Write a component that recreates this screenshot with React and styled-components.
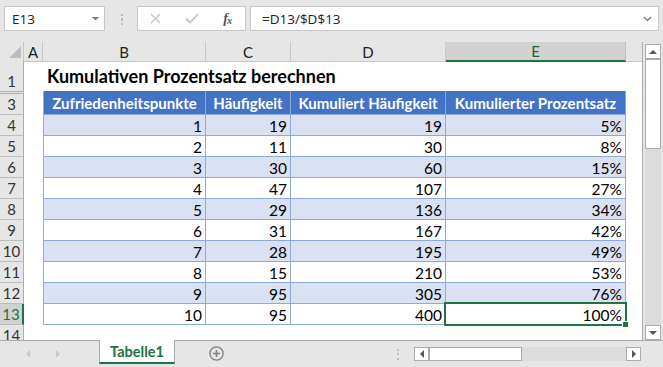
import React from 'react';
import styled, { createGlobalStyle, css } from 'styled-components';

const COLS = '24px 19px 163px 85px 155px 180px 1fr';
const GREEN = '#217346';
const TBORDER = '#8ea9db';

const GlobalStyle = createGlobalStyle`
  html, body { margin: 0; padding: 0; }
  body { background: #e6e6e6; font-family: Lato, "Liberation Sans", sans-serif; }
`;

const Window = styled.div`
  width: 663px;
  height: 367px;
  overflow: hidden;
  display: flex;
  flex-direction: column;
  background: #e6e6e6;
`;

/* ---------- formula bar ---------- */
const FormulaBar = styled.div`
  height: 42px;
  flex: none;
  box-sizing: border-box;
  display: flex;
  align-items: flex-start;
  padding: 6px 0 0 4px;
`;

const Box = styled.div`
  height: 25px;
  box-sizing: border-box;
  background: #fff;
  border: 1px solid #c6c6c6;
  display: flex;
  align-items: center;
  font-family: "Open Sans", "Noto Sans", sans-serif;
  font-size: 13.5px;
  color: #222;
`;

const NameBox = styled(Box)`
  width: 101px;
  justify-content: space-between;
  padding: 0 5px 0 7px;
`;

const FuncBox = styled(Box)`
  width: 109px;
  margin-left: 14px;
`;

const FuncSlot = styled.div`
  width: 36px;
  height: 100%;
  display: flex;
  align-items: center;
  justify-content: center;
`;

const Fx = styled.span`
  font-family: "Liberation Serif", "DejaVu Serif", serif;
  font-style: italic;
  font-weight: bold;
  font-size: 14px;
  color: #555;
  letter-spacing: -1px;
  sub { font-size: 10px; vertical-align: -1px; }
`;

const FormulaInput = styled(Box)`
  width: 409px;
  margin-left: 4px;
  justify-content: space-between;
  padding: 0 6px 0 11px;
`;

const Grip = styled.div`
  width: 2px;
  height: ${p => p.$h || 12}px;
  margin: ${p => p.$m || '0'};
  background: repeating-linear-gradient(to bottom, #bdbdbd 0 2px, transparent 2px 4.5px);
`;

/* ---------- main sheet ---------- */
const Main = styled.div`
  flex: none;
  height: 298px;
  display: flex;
`;

const Sheet = styled.div`
  width: 643px;
  height: 298px;
  box-sizing: border-box;
  border-right: 1px solid #ababab;
  background: #fff;
  display: flex;
  flex-direction: column;
  overflow: hidden;
`;

const Row = styled.div`
  display: grid;
  grid-template-columns: ${COLS};
  height: ${p => p.$h}px;
  flex: none;
`;

const Corner = styled.div`
  background: #e6e6e6;
  border-right: 1px solid #c8c8c8;
  border-bottom: 1px solid #c8c8c8;
  display: flex;
  align-items: flex-end;
  justify-content: flex-end;
  padding: 0 2px 3px 0;
`;

const ColHead = styled.div`
  box-sizing: border-box;
  background: ${p => (p.$sel ? '#d2d2d2' : '#e6e6e6')};
  border-right: 1px solid ${p => (p.$sel ? '#bdbdbd' : '#c8c8c8')};
  border-bottom: ${p => (p.$sel ? `2px solid ${GREEN}` : '1px solid #c8c8c8')};
  display: flex;
  align-items: center;
  justify-content: center;
  font-size: 15px;
  color: ${p => (p.$sel ? '#1f5f3a' : '#222')};
  ${p => p.$blank && css`border-right: none;`}
`;

const RowHead = styled.div`
  box-sizing: border-box;
  background: ${p => (p.$sel ? '#d2d2d2' : '#e6e6e6')};
  border-right: ${p => (p.$sel ? `2px solid ${GREEN}` : '1px solid #ababab')};
  border-bottom: ${p => (p.$noBottom ? 'none' : '1px solid #bdbdbd')};
  ${p => p.$double && css`border-top: 3px double #b0b0b0;`}
  display: flex;
  align-items: flex-end;
  justify-content: center;
  padding-bottom: 1px;
  font-size: 15px;
  color: ${p => (p.$sel ? GREEN : '#333')};
`;

const Cell = styled.div``;

const TitleCell = styled.div`
  grid-column: 3 / 8;
  display: flex;
  align-items: flex-end;
  padding: 0 0 4px 4px;
  font-weight: bold;
  font-size: 18px;
  color: #000;
  white-space: nowrap;
`;

const HeadCell = styled.div`
  box-sizing: border-box;
  background: #4472c4;
  border-right: 1px solid ${TBORDER};
  border-bottom: 1px solid ${TBORDER};
  ${p => p.$first && css`border-left: 1px solid ${TBORDER};`}
  display: flex;
  align-items: flex-end;
  justify-content: center;
  padding-bottom: 2px;
  font-weight: bold;
  font-size: 15px;
  color: #fff;
  white-space: nowrap;
`;

const DataCell = styled.div`
  position: relative;
  box-sizing: border-box;
  background: ${p => (p.$band ? '#d9e1f2' : '#fff')};
  border-right: 1px solid ${TBORDER};
  border-bottom: 1px solid ${TBORDER};
  ${p => p.$first && css`border-left: 1px solid ${TBORDER};`}
  display: flex;
  align-items: flex-end;
  justify-content: flex-end;
  padding: 0 3px 0 0;
  font-size: 15.5px;
  color: #000;
  ${p => p.$active && css`
    &::after {
      content: '';
      position: absolute;
      top: -2px;
      left: -2px;
      right: -2px;
      bottom: -2px;
      border: 2px solid ${GREEN};
    }
  `}
`;

const Handle = styled.span`
  position: absolute;
  right: -4px;
  bottom: -4px;
  width: 5px;
  height: 5px;
  background: ${GREEN};
  border: 1px solid #fff;
  z-index: 2;
`;

/* ---------- scrollbars ---------- */
const VScrollArea = styled.div`
  flex: 1;
  display: flex;
  padding: 2px 0 0 2px;
`;

const VScroll = styled.div`
  width: 16px;
  height: 296px;
  display: flex;
  flex-direction: column;
`;

const ScrollBtn = styled.div`
  flex: none;
  box-sizing: border-box;
  width: ${p => p.$w || 16}px;
  height: ${p => p.$h || 15}px;
  background: #fff;
  border: 1px solid #ababab;
  display: flex;
  align-items: center;
  justify-content: center;
`;

const Thumb = styled.div`
  flex: none;
  box-sizing: border-box;
  background: #fff;
  border: 1px solid #ababab;
  ${p => (p.$vertical
    ? css`height: ${p.$size}px; border-top-width: 2px; margin-top: -1px;`
    : css`width: ${p.$size}px; border-left-width: 2px; margin-left: -1px;`)}
`;

const Track = styled.div`
  flex: 1;
  background: #dcdcdc;
`;

/* ---------- tab bar ---------- */
const TabBar = styled.div`
  flex: 1;
  box-sizing: border-box;
  border-top: 1px solid #ababab;
  display: flex;
  align-items: flex-start;
`;

const Nav = styled.div`
  width: 99px;
  height: 26px;
  display: flex;
  align-items: center;
  padding-left: 20px;
  gap: 15px;
  box-sizing: border-box;
`;

const NavBtn = styled.div`
  width: 15px;
  display: flex;
  justify-content: center;
`;

const Tab = styled.div`
  width: 76px;
  height: 24px;
  margin-top: -1px;
  box-sizing: border-box;
  background: #fff;
  border-left: 1px solid #ababab;
  border-right: 1px solid #ababab;
  border-bottom: 2px solid ${GREEN};
  display: flex;
  align-items: center;
  justify-content: center;
  padding-top: 1px;
  font-weight: bold;
  font-size: 14.5px;
  color: ${GREEN};
`;

const AddSheet = styled.div`
  margin: 5px 0 0 34px;
  width: 15px;
  height: 15px;
  display: flex;
`;

const Spacer = styled.div`
  flex: 1;
`;

const HScroll = styled.div`
  width: 227px;
  height: 14px;
  margin: 6px 22px 0 0;
  display: flex;
`;

const Tri = ({ dir, color = '#555', size = 4 }) => {
  const s = size;
  const pts = {
    up: `0,${s} ${s},0 ${2 * s},${s}`,
    down: `0,0 ${2 * s},0 ${s},${s}`,
    left: `${s},0 ${s},${2 * s} 0,${s}`,
    right: `0,0 ${s},${s} 0,${2 * s}`,
  }[dir];
  const vertical = dir === 'up' || dir === 'down';
  return (
    <svg width={vertical ? 2 * s : s} height={vertical ? s : 2 * s}>
      <polygon points={pts} fill={color} />
    </svg>
  );
};

const headers = ['Zufriedenheitspunkte', 'Häufigkeit', 'Kumuliert Häufigkeit', 'Kumulierter Prozentsatz'];
const data = [
  [1, 19, 19, '5%'],
  [2, 11, 30, '8%'],
  [3, 30, 60, '15%'],
  [4, 47, 107, '27%'],
  [5, 29, 136, '34%'],
  [6, 31, 167, '42%'],
  [7, 28, 195, '49%'],
  [8, 15, 210, '53%'],
  [9, 95, 305, '76%'],
  [10, 95, 400, '100%'],
];

export default function App() {
  return (
    <>
      <GlobalStyle />
      <Window>
        <FormulaBar>
          <NameBox>
            <span>E13</span>
            <Tri dir="down" color="#7a7a7a" size={3.5} />
          </NameBox>
          <Grip $h={12} $m="8px 0 0 16px" />
          <FuncBox>
            <FuncSlot>
              <svg width="11" height="11" viewBox="0 0 11 11">
                <path d="M1 1 L10 10 M10 1 L1 10" stroke="#c4c4c4" strokeWidth="1.4" fill="none" />
              </svg>
            </FuncSlot>
            <FuncSlot>
              <svg width="14" height="11" viewBox="0 0 14 11">
                <path d="M1 5.5 L5 9.5 L13 1" stroke="#c4c4c4" strokeWidth="1.8" fill="none" />
              </svg>
            </FuncSlot>
            <FuncSlot>
              <Fx>f<sub>x</sub></Fx>
            </FuncSlot>
          </FuncBox>
          <FormulaInput>
            <span>=D13/$D$13</span>
            <svg width="9" height="6" viewBox="0 0 9 6">
              <path d="M1 1 L4.5 4.5 L8 1" stroke="#808080" strokeWidth="1.5" fill="none" />
            </svg>
          </FormulaInput>
        </FormulaBar>

        <Main>
          <Sheet>
            <Row $h={19}>
              <Corner>
                <svg width="12" height="12">
                  <polygon points="12,0 12,12 0,12" fill="#bcbcbc" />
                </svg>
              </Corner>
              {['A', 'B', 'C', 'D', 'E'].map(c => (
                <ColHead key={c} $sel={c === 'E'}>{c}</ColHead>
              ))}
              <ColHead $blank />
            </Row>
            <Row $h={30}>
              <RowHead $noBottom>1</RowHead>
              <Cell />
              <TitleCell>Kumulativen Prozentsatz berechnen</TitleCell>
            </Row>
            <Row $h={24}>
              <RowHead $double>3</RowHead>
              <Cell />
              {headers.map((h, i) => (
                <HeadCell key={h} $first={i === 0}>{h}</HeadCell>
              ))}
              <Cell />
            </Row>
            {data.map((r, i) => (
              <Row $h={21} key={i}>
                <RowHead $sel={i === 9}>{i + 4}</RowHead>
                <Cell />
                {r.map((v, j) => {
                  const active = i === 9 && j === 3;
                  return (
                    <DataCell key={j} $band={i % 2 === 0} $first={j === 0} $active={active}>
                      {v}
                      {active && <Handle />}
                    </DataCell>
                  );
                })}
                <Cell />
              </Row>
            ))}
            <Row $h={21}>
              <RowHead>14</RowHead>
            </Row>
          </Sheet>
          <VScrollArea>
            <VScroll>
              <ScrollBtn><Tri dir="up" size={4} /></ScrollBtn>
              <Thumb $vertical $size={91} />
              <Track />
              <ScrollBtn><Tri dir="down" size={4} /></ScrollBtn>
            </VScroll>
          </VScrollArea>
        </Main>

        <TabBar>
          <Nav>
            <NavBtn><Tri dir="left" color="#c8c8c8" size={4} /></NavBtn>
            <NavBtn><Tri dir="right" color="#c8c8c8" size={4} /></NavBtn>
          </Nav>
          <Tab>Tabelle1</Tab>
          <AddSheet>
            <svg width="15" height="15" viewBox="0 0 15 15">
              <circle cx="7.5" cy="7.5" r="6.6" stroke="#808080" strokeWidth="1.3" fill="none" />
              <path d="M7.5 4 V11 M4 7.5 H11" stroke="#808080" strokeWidth="1.6" />
            </svg>
          </AddSheet>
          <Spacer />
          <Grip $h={11} $m="8px 15px 0 0" />
          <HScroll>
            <ScrollBtn $w={15} $h={14}><Tri dir="left" size={4} /></ScrollBtn>
            <Thumb $size={94} />
            <Track />
            <ScrollBtn $w={15} $h={14}><Tri dir="right" size={4} /></ScrollBtn>
          </HScroll>
        </TabBar>
      </Window>
    </>
  );
}
